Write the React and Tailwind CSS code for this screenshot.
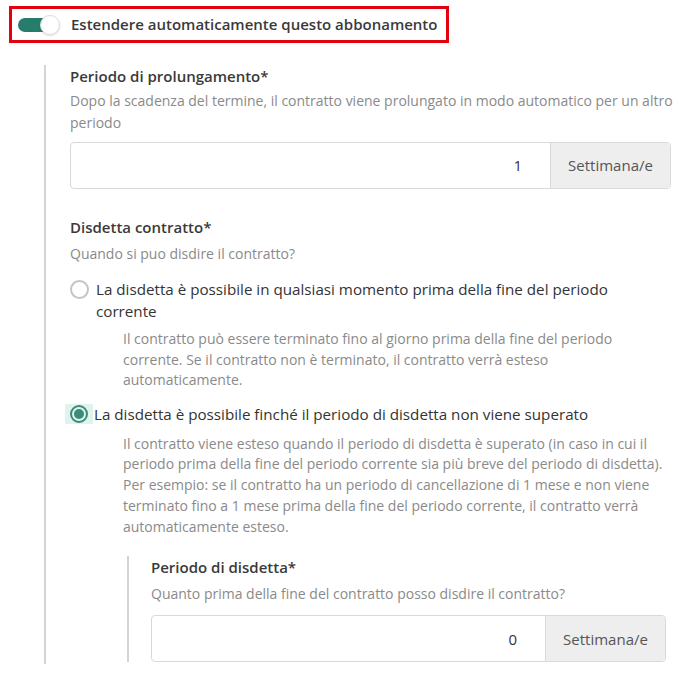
import React from 'react';

const font = { fontFamily: '"Open Sans", "Noto Sans", sans-serif' };

function NumberField({ value, unit }) {
  return (
    <div className="flex h-[47px] rounded border border-[#d9d9d9] overflow-hidden">
      <div className="flex-1 flex items-center justify-end pr-[28px] text-[15px] text-[#333]">{value}</div>
      <div className="w-[120px] flex items-center justify-center bg-[#eeeeee] border-l border-[#d9d9d9] text-[15px] text-[#555]">
        {unit}
      </div>
    </div>
  );
}

function Radio({ checked }) {
  if (checked) {
    return (
      <span className="flex items-center justify-center w-[28px] h-[20px] bg-[#dff3ef] -ml-[5px] mr-[1px] shrink-0">
        <span className="w-[18px] h-[18px] rounded-full border-2 border-[#3c8a78] flex items-center justify-center">
          <span className="w-[10px] h-[10px] rounded-full bg-[#3c8a78]" />
        </span>
      </span>
    );
  }
  return <span className="w-[19px] h-[19px] rounded-full border-2 border-[#c4c4c4] mr-[7px] mt-[2px] shrink-0" />;
}

export default function App() {
  return (
    <div className="w-[688px] h-[689px] bg-white text-[#333] overflow-hidden" style={font}>
      {/* Toggle header */}
      <div className="pt-[6px] pl-[9px]">
        <div className="inline-flex items-center gap-[11px] h-[37px] border-[3px] border-[#e3000f] pl-[6px] pr-[9px]">
          <div className="relative w-[42px] h-[20px] flex items-center">
            <div className="w-[38px] h-[14px] rounded-full bg-[#277d6c]" />
            <div className="absolute right-0 top-0 w-[20px] h-[20px] rounded-full bg-white border border-[#ddd] shadow" />
          </div>
          <span className="text-[15px] font-semibold text-[#3a3a3a]">Estendere automaticamente questo abbonamento</span>
        </div>
      </div>

      <div className="ml-[44px] mt-[22px] border-l-2 border-[#d4d4d4] pl-[24px] pr-[17px] pb-[2px]">
        <div className="text-[15px] font-semibold leading-[22px] text-[#3a3a3a]">Periodo di prolungamento*</div>
        <p className="mt-[3px] -mr-[14px] text-[14px] leading-[22px] text-[#8a8a8a]">
          Dopo la scadenza del termine, il contratto viene prolungato in modo automatico per un altro periodo
        </p>
        <div className="mt-[8px]">
          <NumberField value="1" unit="Settimana/e" />
        </div>

        <div className="mt-[27px] text-[15px] font-semibold leading-[22px] text-[#3a3a3a]">Disdetta contratto*</div>
        <p className="mt-[5px] text-[14px] leading-[22px] text-[#8a8a8a]">Quando si puo disdire il contratto?</p>

        <div className="mt-[13px] flex items-start">
          <Radio />
          <span className="text-[15.2px] leading-[22px] text-[#333]">
            La disdetta è possibile in qualsiasi momento prima della fine del periodo corrente
          </span>
        </div>
        <p className="mt-[7px] ml-[53px] text-[14px] leading-[20.5px] text-[#8a8a8a]">
          Il contratto può essere terminato fino al giorno prima della fine del periodo corrente. Se il contratto non è
          terminato, il contratto verrà esteso automaticamente.
        </p>

        <div className="mt-[12px] flex items-center">
          <Radio checked />
          <span className="text-[15.2px] leading-[22px] text-[#333]">
            La disdetta è possibile finché il periodo di disdetta non viene superato
          </span>
        </div>
        <p className="mt-[9px] ml-[53px] text-[14px] leading-[20.8px] text-[#8a8a8a]">
          Il contratto viene esteso quando il periodo di disdetta è superato (in caso in cui il periodo prima della
          fine del periodo corrente sia più breve del periodo di disdetta). Per esempio: se il contratto ha un periodo
          di cancellazione di 1 mese e non viene terminato fino a 1 mese prima della fine del periodo corrente, il
          contratto verrà automaticamente esteso.
        </p>

        <div className="mt-[19px] ml-[57px] border-l-2 border-[#d4d4d4] pl-[22px] mr-[5px]">
          <div className="text-[15px] font-semibold leading-[22px] text-[#3a3a3a]">Periodo di disdetta*</div>
          <p className="mt-[5px] text-[14px] leading-[22px] text-[#8a8a8a]">
            Quanto prima della fine del contratto posso disdire il contratto?
          </p>
          <div className="mt-[10px]">
            <NumberField value="0" unit="Settimana/e" />
          </div>
        </div>
      </div>
    </div>
  );
}
